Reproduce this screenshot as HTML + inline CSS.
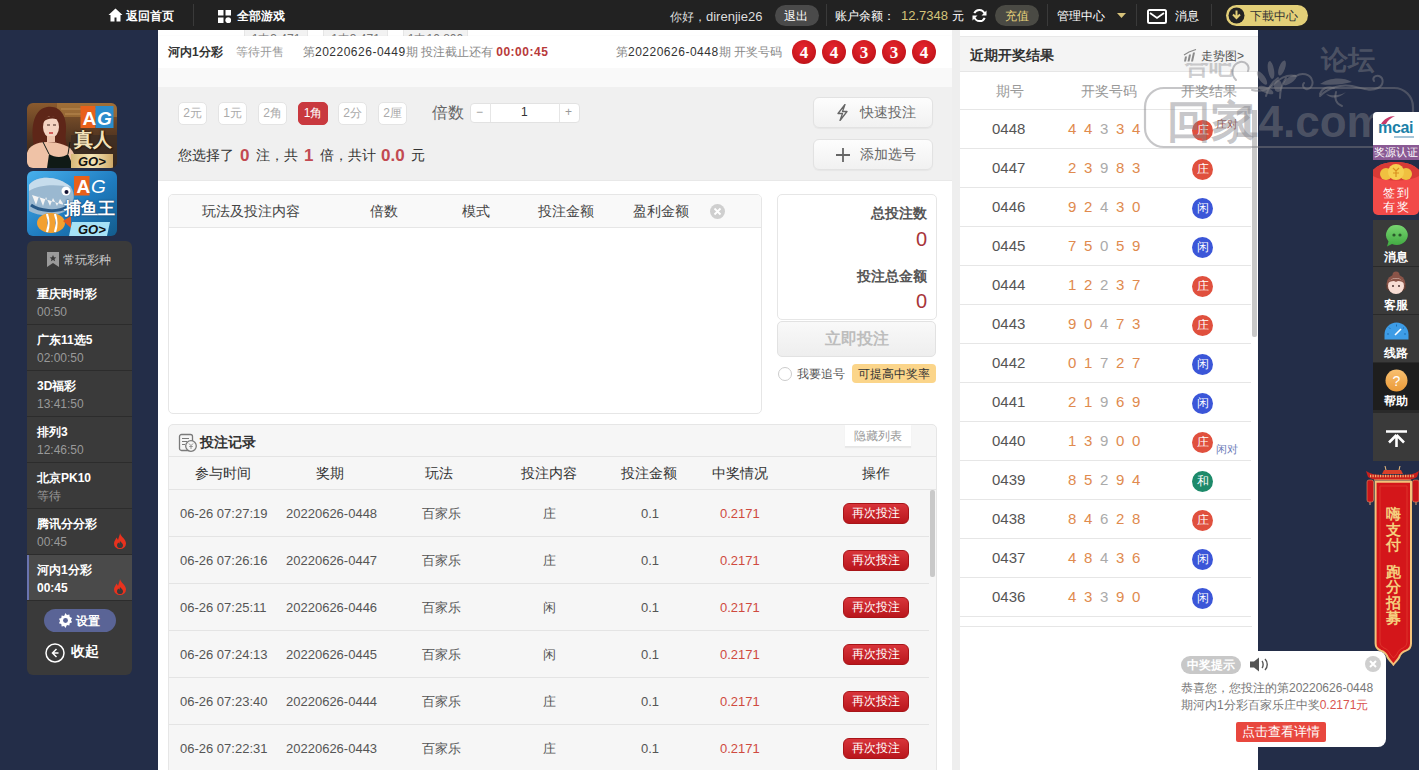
<!DOCTYPE html><html><head><meta charset="utf-8"><style>
*{margin:0;padding:0;box-sizing:border-box}
html,body{width:1419px;height:770px;overflow:hidden}
body{background:#232d48;font-family:"Liberation Sans",sans-serif;font-size:12px;color:#333;position:relative}
.a{position:absolute}
.t{position:absolute;white-space:nowrap;line-height:1}
#top{left:0;top:0;width:1419px;height:30px;background:#222222;z-index:3}
#top .t{color:#fff;font-size:12px;top:10px}
.sep{position:absolute;top:4px;width:1px;height:22px;background:#3a3a3a}
.pill{position:absolute;top:5px;height:21px;border-radius:11px}
.mb{position:absolute;top:102px;width:29px;height:23px;background:#fff;border:1px solid #e4e4e4;border-radius:5px;color:#aaa;font-size:12px;text-align:center;line-height:21px}
.mb.on{background:#c9393f;border-color:#c9393f;color:#fff;width:30px}
.ball{position:absolute;top:40px;width:24px;height:24px;border-radius:50%;background:radial-gradient(circle at 45% 35%,#e5262d,#c8161d 65%,#a80f14);color:#fff;font-family:"Liberation Serif",serif;font-size:17px;font-weight:bold;text-align:center;line-height:25px}
.btn2{position:absolute;left:813px;width:120px;height:31px;border:1px solid #e2e2e2;border-radius:6px;background:linear-gradient(#fdfdfd,#f1f1f1);box-shadow:0 1px 1px rgba(0,0,0,.04)}
.th{position:absolute;font-size:14px;color:#444;white-space:nowrap;line-height:1}
.rec{position:absolute;font-size:13px;color:#555;white-space:nowrap;line-height:1}
.rb{position:absolute;left:843px;width:66px;height:21px;border-radius:6px;background:linear-gradient(#d8343a,#b9161c);border:1px solid #a81418;color:#fff;font-size:12px;text-align:center;line-height:19px}
.rrow{position:absolute;left:960px;width:291px;height:1px;background:#e6e6e6}
.rq{position:absolute;left:992px;font-size:15px;color:#555;line-height:1}
.rn{position:absolute;font-size:15px;color:#e08a4e;line-height:1}
.rn.g{color:#aaa}
.bd{position:absolute;width:21px;height:21px;border-radius:50%;color:#fff;font-size:12px;text-align:center;line-height:21px}
.zh{background:#e0503e}.xi{background:#3b56d8}.he{background:#1d8a6a}
.side{position:absolute;left:27px;width:105px;height:46px;border-top:1px solid #2c2c2c}
.side .n{position:absolute;left:10px;top:9px;font-size:12px;font-weight:bold;color:#fff;line-height:1;white-space:nowrap}
.side .m{position:absolute;left:10px;top:27px;font-size:12px;color:#999;line-height:1;white-space:nowrap}
.fl{position:absolute;left:1373px;width:46px;background:#3a3a3a;z-index:6}
.fl .tx{position:absolute;left:0;width:46px;text-align:center;color:#fff;font-size:12px;line-height:1}
</style></head><body>
<div id="top" class="a">
<svg class="a" style="left:108px;top:8px" width="15" height="14" viewBox="0 0 15 14"><path d="M7.5 0.5L0.5 7h2v6.5h4v-4h2v4h4V7h2z" fill="#fff"/></svg>
<div class="t" style="left:126px;font-weight:bold">返回首页</div>
<div class="sep" style="left:193px"></div>
<svg class="a" style="left:218px;top:10px" width="13" height="13" viewBox="0 0 13 13"><rect x="0" y="0" width="5.5" height="5.5" fill="#fff"/><rect x="7.5" y="0" width="5.5" height="5.5" fill="#fff"/><rect x="0" y="7.5" width="5.5" height="5.5" fill="#fff"/><circle cx="10.25" cy="10.25" r="2.9" fill="#fff"/></svg>
<div class="t" style="left:237px;font-weight:bold">全部游戏</div>
<div class="t" style="left:670px;color:#ddd">你好，<span style="font-size:13px">direnjie26</span></div>
<div class="pill" style="left:775px;width:44px;background:#4a4a4a"></div>
<div class="t" style="left:784px">退出</div>
<div class="sep" style="left:826px"></div>
<div class="t" style="left:835px">账户余额：</div>
<div class="t" style="left:901px;color:#d4c47a;font-size:13px;top:9px">12.7348</div>
<div class="t" style="left:952px">元</div>
<svg class="a" style="left:972px;top:8px" width="15" height="15" viewBox="0 0 15 15"><path d="M12.5 5.5A5.5 5.5 0 0 0 2.3 5.2M2.5 9.5A5.5 5.5 0 0 0 12.7 9.8" fill="none" stroke="#fff" stroke-width="2"/><path d="M14.5 2.5v5h-5z" fill="#fff"/><path d="M0.5 12.5v-5h5z" fill="#fff"/></svg>
<div class="pill" style="left:995px;width:44px;background:#4a4a44"></div>
<div class="t" style="left:1005px;color:#e6d27a">充值</div>
<div class="sep" style="left:1047px"></div>
<div class="t" style="left:1057px">管理中心</div>
<svg class="a" style="left:1117px;top:13px" width="9" height="5" viewBox="0 0 9 5"><path d="M0 0h9L4.5 5z" fill="#d6c27a"/></svg>
<div class="sep" style="left:1136px"></div>
<svg class="a" style="left:1147px;top:9px" width="20" height="15" viewBox="0 0 20 15"><rect x="1" y="1" width="18" height="13" rx="1.5" fill="none" stroke="#fff" stroke-width="2"/><path d="M3 4l7 5 7-5" fill="none" stroke="#fff" stroke-width="1.8"/></svg>
<div class="t" style="left:1175px">消息</div>
<div class="sep" style="left:1211px"></div>
<div class="pill" style="left:1226px;width:82px;background:#e3cf78"></div>
<svg class="a" style="left:1228px;top:7px" width="17" height="17" viewBox="0 0 17 17"><circle cx="8.5" cy="8.5" r="8" fill="#222"/><path d="M8.5 3.5v7M5 7.5l3.5 3.5 3.5-3.5" fill="none" stroke="#e3cf78" stroke-width="2"/></svg>
<div class="t" style="left:1250px;color:#333">下載中心</div>
</div>
<div class="a" style="left:158px;top:30px;width:794px;height:740px;background:#fff"></div>
<div class="a" style="left:244px;top:26px;width:64px;height:12px;background:#f2f2f2;border:1px solid #e6e6e6;overflow:hidden"><div class="t" style="left:0;width:62px;text-align:center;top:6px;font-size:12px;color:#777">1中3.471</div></div>
<div class="a" style="left:323px;top:26px;width:65px;height:12px;background:#f2f2f2;border:1px solid #e6e6e6;overflow:hidden"><div class="t" style="left:0;width:63px;text-align:center;top:6px;font-size:12px;color:#777">1中3.471</div></div>
<div class="a" style="left:403px;top:26px;width:65px;height:12px;background:#f2f2f2;border:1px solid #e6e6e6;overflow:hidden"><div class="t" style="left:0;width:63px;text-align:center;top:6px;font-size:12px;color:#777">1中10.800</div></div>
<div class="a" style="left:158px;top:36px;width:794px;height:32px;background:#fff;box-shadow:0 1px 2px rgba(0,0,0,.16)"></div>
<div class="a" style="left:158px;top:68px;width:794px;height:19px;background:#f9f9f9"></div>
<div class="a" style="left:158px;top:87px;width:794px;height:94px;background:#f0f0f0;border-bottom:1px solid #e8e8e8"></div>
<div class="t" style="left:168px;top:46px;font-size:12px;font-weight:bold;color:#333">河内1分彩</div>
<div class="t" style="left:236px;top:46px;font-size:12px;color:#999">等待开售</div>
<div class="t" style="left:303px;top:46px;font-size:12px;color:#888">第<span style="color:#333;letter-spacing:.5px">20220626-0449</span>期 投注截止还有 <b style="color:#b83a3a;letter-spacing:.5px">00:00:45</b></div>
<div class="t" style="left:616px;top:46px;font-size:12px;color:#888">第<span style="color:#333;letter-spacing:.5px">20220626-0448</span>期 开奖号码</div>
<div class="ball" style="left:792px">4</div>
<div class="ball" style="left:822px">4</div>
<div class="ball" style="left:852px">3</div>
<div class="ball" style="left:882px">3</div>
<div class="ball" style="left:912px">4</div>
<div class="mb" style="left:178px">2元</div>
<div class="mb" style="left:218px">1元</div>
<div class="mb" style="left:258px">2角</div>
<div class="mb on" style="left:298px">1角</div>
<div class="mb" style="left:338px">2分</div>
<div class="mb" style="left:378px">2厘</div>
<div class="t" style="left:432px;top:105px;font-size:16px;color:#666">倍数</div>
<div class="a" style="left:470px;top:103px;width:110px;height:20px;background:#fff;border:1px solid #e2e2e2;border-radius:4px"></div>
<div class="a" style="left:490px;top:103px;width:1px;height:19px;background:#e6e6e6"></div>
<div class="a" style="left:559px;top:103px;width:1px;height:19px;background:#e6e6e6"></div>
<div class="t" style="left:476px;top:106px;font-size:12px;color:#999">−</div>
<div class="t" style="left:521px;top:106px;font-size:12px;color:#333">1</div>
<div class="t" style="left:565px;top:106px;font-size:12px;color:#999">+</div>
<div class="t" style="left:178px;top:148px;font-size:14px;color:#333">您选择了</div>
<div class="t" style="left:240px;top:147px;font-size:17px;font-weight:bold;color:#c24a52">0</div>
<div class="t" style="left:256px;top:148px;font-size:14px;color:#333">注，共</div>
<div class="t" style="left:304px;top:147px;font-size:17px;font-weight:bold;color:#c24a52">1</div>
<div class="t" style="left:320px;top:148px;font-size:14px;color:#333">倍，共计</div>
<div class="t" style="left:381px;top:147px;font-size:17px;font-weight:bold;color:#c24a52">0.0</div>
<div class="t" style="left:411px;top:148px;font-size:14px;color:#333">元</div>
<div class="btn2" style="top:97px"></div>
<svg class="a" style="left:836px;top:104px" width="13" height="17" viewBox="0 0 13 17"><path d="M9 0.5L2 9.5h4.5L4 16.5l7-9H6.5z" fill="none" stroke="#666" stroke-width="1.3" stroke-linejoin="round"/></svg>
<div class="t" style="left:860px;top:105px;font-size:14px;color:#666">快速投注</div>
<div class="btn2" style="top:139px"></div>
<svg class="a" style="left:836px;top:148px" width="14" height="14" viewBox="0 0 14 14"><path d="M7 0v14M0 7h14" stroke="#666" stroke-width="1.8"/></svg>
<div class="t" style="left:860px;top:147px;font-size:14px;color:#666">添加选号</div>
<div class="a" style="left:168px;top:194px;width:594px;height:220px;background:#fff;border:1px solid #e6e6e6;border-radius:5px;overflow:hidden"><div class="a" style="left:0;top:0;width:592px;height:33px;background:#f9f9f9;border-bottom:1px solid #e6e6e6"></div></div>
<div class="th" style="left:202px;top:204px">玩法及投注内容</div>
<div class="th" style="left:370px;top:204px">倍数</div>
<div class="th" style="left:462px;top:204px">模式</div>
<div class="th" style="left:538px;top:204px">投注金额</div>
<div class="th" style="left:633px;top:204px">盈利金额</div>
<svg class="a" style="left:710px;top:204px" width="15" height="15" viewBox="0 0 15 15"><circle cx="7.5" cy="7.5" r="7.5" fill="#cfcfcf"/><path d="M4.5 4.5l6 6M10.5 4.5l-6 6" stroke="#fff" stroke-width="1.8"/></svg>
<div class="a" style="left:777px;top:194px;width:160px;height:126px;background:#fff;border:1px solid #e6e6e6;border-radius:5px"></div>
<div class="t" style="left:777px;width:150px;text-align:right;top:206px;font-size:14px;font-weight:bold;color:#555">总投注数</div>
<div class="t" style="left:777px;width:150px;text-align:right;top:229px;font-size:20px;color:#a8353a">0</div>
<div class="t" style="left:777px;width:150px;text-align:right;top:269px;font-size:14px;font-weight:bold;color:#555">投注总金额</div>
<div class="t" style="left:777px;width:150px;text-align:right;top:291px;font-size:20px;color:#a8353a">0</div>
<div class="a" style="left:777px;top:321px;width:159px;height:36px;border:1px solid #e2e2e2;border-radius:5px;background:linear-gradient(#f9f9f9,#eeeeee)"></div>
<div class="t" style="left:777px;width:159px;text-align:center;top:331px;font-size:16px;font-weight:bold;color:#bdbdbd">立即投注</div>
<div class="a" style="left:778px;top:367px;width:14px;height:14px;border:1px solid #ccc;border-radius:50%;background:#fff"></div>
<div class="t" style="left:797px;top:368px;font-size:12px;color:#555">我要追号</div>
<div class="a" style="left:852px;top:364px;width:84px;height:19px;border-radius:4px;background:#fbd58a"></div>
<div class="t" style="left:852px;width:84px;text-align:center;top:368px;font-size:12px;color:#333">可提高中奖率</div>
<div class="a" style="left:168px;top:424px;width:769px;height:360px;background:#f6f6f6;border:1px solid #e6e6e6;border-radius:5px"></div>
<div class="a" style="left:169px;top:456px;width:767px;height:1px;background:#e4e4e4"></div>
<div class="a" style="left:169px;top:489px;width:767px;height:1px;background:#e4e4e4"></div>
<svg class="a" style="left:178px;top:433px" width="20" height="20" viewBox="0 0 20 20"><rect x="1.5" y="1.5" width="13" height="16" rx="2" fill="none" stroke="#7a7a7a" stroke-width="1.3"/><path d="M4 5.5h7M4 8.5h5M4 11.5h3" stroke="#7a7a7a" stroke-width="1.2"/><circle cx="13" cy="13" r="5.3" fill="#f6f6f6" stroke="#7a7a7a" stroke-width="1.3"/><path d="M11 10.5l2 2.2 2-2.2M13 12.7v3.3M11.2 13.5h3.6" fill="none" stroke="#8a8a8a" stroke-width=".9"/></svg>
<div class="t" style="left:200px;top:435px;font-size:14px;font-weight:bold;color:#333">投注记录</div>
<div class="a" style="left:845px;top:425px;width:66px;height:22px;background:#fff;border-bottom:1px solid #e6e6e6;box-shadow:0 1px 1px rgba(0,0,0,.05)"></div>
<div class="t" style="left:845px;width:66px;text-align:center;top:430px;font-size:12px;color:#999">隐藏列表</div>
<div class="th" style="left:195px;top:466px;color:#333">参与时间</div>
<div class="th" style="left:316px;top:466px;color:#333">奖期</div>
<div class="th" style="left:425px;top:466px;color:#333">玩法</div>
<div class="th" style="left:521px;top:466px;color:#333">投注内容</div>
<div class="th" style="left:621px;top:466px;color:#333">投注金额</div>
<div class="th" style="left:712px;top:466px;color:#333">中奖情况</div>
<div class="th" style="left:862px;top:466px;color:#333">操作</div>
<div class="rec" style="left:180px;top:507px">06-26 07:27:19</div>
<div class="rec" style="left:286px;top:507px">20220626-0448</div>
<div class="rec" style="left:422px;top:507px">百家乐</div>
<div class="rec" style="left:543px;top:507px">庄</div>
<div class="rec" style="left:641px;top:507px">0.1</div>
<div class="rec" style="left:720px;top:507px;color:#cf4a3f">0.2171</div>
<div class="rb" style="top:503px">再次投注</div>
<div class="a" style="left:169px;top:536px;width:760px;height:1px;background:#e4e4e4"></div>
<div class="rec" style="left:180px;top:554px">06-26 07:26:16</div>
<div class="rec" style="left:286px;top:554px">20220626-0447</div>
<div class="rec" style="left:422px;top:554px">百家乐</div>
<div class="rec" style="left:543px;top:554px">庄</div>
<div class="rec" style="left:641px;top:554px">0.1</div>
<div class="rec" style="left:720px;top:554px;color:#cf4a3f">0.2171</div>
<div class="rb" style="top:550px">再次投注</div>
<div class="a" style="left:169px;top:583px;width:760px;height:1px;background:#e4e4e4"></div>
<div class="rec" style="left:180px;top:601px">06-26 07:25:11</div>
<div class="rec" style="left:286px;top:601px">20220626-0446</div>
<div class="rec" style="left:422px;top:601px">百家乐</div>
<div class="rec" style="left:543px;top:601px">闲</div>
<div class="rec" style="left:641px;top:601px">0.1</div>
<div class="rec" style="left:720px;top:601px;color:#cf4a3f">0.2171</div>
<div class="rb" style="top:597px">再次投注</div>
<div class="a" style="left:169px;top:630px;width:760px;height:1px;background:#e4e4e4"></div>
<div class="rec" style="left:180px;top:648px">06-26 07:24:13</div>
<div class="rec" style="left:286px;top:648px">20220626-0445</div>
<div class="rec" style="left:422px;top:648px">百家乐</div>
<div class="rec" style="left:543px;top:648px">闲</div>
<div class="rec" style="left:641px;top:648px">0.1</div>
<div class="rec" style="left:720px;top:648px;color:#cf4a3f">0.2171</div>
<div class="rb" style="top:644px">再次投注</div>
<div class="a" style="left:169px;top:677px;width:760px;height:1px;background:#e4e4e4"></div>
<div class="rec" style="left:180px;top:695px">06-26 07:23:40</div>
<div class="rec" style="left:286px;top:695px">20220626-0444</div>
<div class="rec" style="left:422px;top:695px">百家乐</div>
<div class="rec" style="left:543px;top:695px">庄</div>
<div class="rec" style="left:641px;top:695px">0.1</div>
<div class="rec" style="left:720px;top:695px;color:#cf4a3f">0.2171</div>
<div class="rb" style="top:691px">再次投注</div>
<div class="a" style="left:169px;top:724px;width:760px;height:1px;background:#e4e4e4"></div>
<div class="rec" style="left:180px;top:742px">06-26 07:22:31</div>
<div class="rec" style="left:286px;top:742px">20220626-0443</div>
<div class="rec" style="left:422px;top:742px">百家乐</div>
<div class="rec" style="left:543px;top:742px">庄</div>
<div class="rec" style="left:641px;top:742px">0.1</div>
<div class="rec" style="left:720px;top:742px;color:#cf4a3f">0.2171</div>
<div class="rb" style="top:738px">再次投注</div>
<div class="a" style="left:930px;top:490px;width:5px;height:87px;background:#c9c9c9;border-radius:2px"></div>
<div class="a" style="left:952px;top:30px;width:8px;height:740px;background:#eeeeee"></div>
<div class="a" style="left:960px;top:30px;width:298px;height:740px;background:#fff"></div>
<div class="a" style="left:960px;top:36px;width:298px;height:36px;background:#f4f4f4;border-top:1px solid #e8e8e8;border-bottom:1px solid #e6e6e6"></div>
<div class="t" style="left:970px;top:48px;font-size:14px;font-weight:bold;color:#333">近期开奖结果</div>
<svg class="a" style="left:1183px;top:49px" width="14" height="13" viewBox="0 0 14 13"><path d="M1 12.5l1-5h2l-1 5zM4.5 12.5l1.5-7h2l-1.5 7zM8 12.5l2-9h2l-2 9z" fill="#8a8a8a"/><path d="M1 6l5-3 7-2.5" fill="none" stroke="#8a8a8a" stroke-width="1.2"/></svg>
<div class="t" style="left:1201px;top:50px;font-size:12px;color:#555">走势图&gt;</div>
<div class="t" style="left:996px;top:84px;font-size:14px;color:#999">期号</div>
<div class="t" style="left:1081px;top:84px;font-size:14px;color:#999">开奖号码</div>
<div class="t" style="left:1181px;top:84px;font-size:14px;color:#999">开奖结果</div>
<div class="rrow" style="top:109px"></div>
<div class="rq" style="top:121px">0448</div>
<div class="rn" style="left:1068px;top:121px">4</div>
<div class="rn" style="left:1084px;top:121px">4</div>
<div class="rn g" style="left:1100px;top:121px">3</div>
<div class="rn" style="left:1116px;top:121px">3</div>
<div class="rn" style="left:1132px;top:121px">4</div>
<div class="bd zh" style="left:1192px;top:120px">庄</div>
<div class="t" style="left:1216px;top:119px;font-size:11px;color:#a0504a">庄对</div>
<div class="rrow" style="top:148px"></div>
<div class="rq" style="top:160px">0447</div>
<div class="rn" style="left:1068px;top:160px">2</div>
<div class="rn" style="left:1084px;top:160px">3</div>
<div class="rn g" style="left:1100px;top:160px">9</div>
<div class="rn" style="left:1116px;top:160px">8</div>
<div class="rn" style="left:1132px;top:160px">3</div>
<div class="bd zh" style="left:1192px;top:159px">庄</div>
<div class="rrow" style="top:187px"></div>
<div class="rq" style="top:199px">0446</div>
<div class="rn" style="left:1068px;top:199px">9</div>
<div class="rn" style="left:1084px;top:199px">2</div>
<div class="rn g" style="left:1100px;top:199px">4</div>
<div class="rn" style="left:1116px;top:199px">3</div>
<div class="rn" style="left:1132px;top:199px">0</div>
<div class="bd xi" style="left:1192px;top:198px">闲</div>
<div class="rrow" style="top:226px"></div>
<div class="rq" style="top:238px">0445</div>
<div class="rn" style="left:1068px;top:238px">7</div>
<div class="rn" style="left:1084px;top:238px">5</div>
<div class="rn g" style="left:1100px;top:238px">0</div>
<div class="rn" style="left:1116px;top:238px">5</div>
<div class="rn" style="left:1132px;top:238px">9</div>
<div class="bd xi" style="left:1192px;top:237px">闲</div>
<div class="rrow" style="top:265px"></div>
<div class="rq" style="top:277px">0444</div>
<div class="rn" style="left:1068px;top:277px">1</div>
<div class="rn" style="left:1084px;top:277px">2</div>
<div class="rn g" style="left:1100px;top:277px">2</div>
<div class="rn" style="left:1116px;top:277px">3</div>
<div class="rn" style="left:1132px;top:277px">7</div>
<div class="bd zh" style="left:1192px;top:276px">庄</div>
<div class="rrow" style="top:304px"></div>
<div class="rq" style="top:316px">0443</div>
<div class="rn" style="left:1068px;top:316px">9</div>
<div class="rn" style="left:1084px;top:316px">0</div>
<div class="rn g" style="left:1100px;top:316px">4</div>
<div class="rn" style="left:1116px;top:316px">7</div>
<div class="rn" style="left:1132px;top:316px">3</div>
<div class="bd zh" style="left:1192px;top:315px">庄</div>
<div class="rrow" style="top:343px"></div>
<div class="rq" style="top:355px">0442</div>
<div class="rn" style="left:1068px;top:355px">0</div>
<div class="rn" style="left:1084px;top:355px">1</div>
<div class="rn g" style="left:1100px;top:355px">7</div>
<div class="rn" style="left:1116px;top:355px">2</div>
<div class="rn" style="left:1132px;top:355px">7</div>
<div class="bd xi" style="left:1192px;top:354px">闲</div>
<div class="rrow" style="top:382px"></div>
<div class="rq" style="top:394px">0441</div>
<div class="rn" style="left:1068px;top:394px">2</div>
<div class="rn" style="left:1084px;top:394px">1</div>
<div class="rn g" style="left:1100px;top:394px">9</div>
<div class="rn" style="left:1116px;top:394px">6</div>
<div class="rn" style="left:1132px;top:394px">9</div>
<div class="bd xi" style="left:1192px;top:393px">闲</div>
<div class="rrow" style="top:421px"></div>
<div class="rq" style="top:433px">0440</div>
<div class="rn" style="left:1068px;top:433px">1</div>
<div class="rn" style="left:1084px;top:433px">3</div>
<div class="rn g" style="left:1100px;top:433px">9</div>
<div class="rn" style="left:1116px;top:433px">0</div>
<div class="rn" style="left:1132px;top:433px">0</div>
<div class="bd zh" style="left:1192px;top:432px">庄</div>
<div class="t" style="left:1216px;top:444px;font-size:11px;color:#6a7ab8">闲对</div>
<div class="rrow" style="top:460px"></div>
<div class="rq" style="top:472px">0439</div>
<div class="rn" style="left:1068px;top:472px">8</div>
<div class="rn" style="left:1084px;top:472px">5</div>
<div class="rn g" style="left:1100px;top:472px">2</div>
<div class="rn" style="left:1116px;top:472px">9</div>
<div class="rn" style="left:1132px;top:472px">4</div>
<div class="bd he" style="left:1192px;top:471px">和</div>
<div class="rrow" style="top:499px"></div>
<div class="rq" style="top:511px">0438</div>
<div class="rn" style="left:1068px;top:511px">8</div>
<div class="rn" style="left:1084px;top:511px">4</div>
<div class="rn g" style="left:1100px;top:511px">6</div>
<div class="rn" style="left:1116px;top:511px">2</div>
<div class="rn" style="left:1132px;top:511px">8</div>
<div class="bd zh" style="left:1192px;top:510px">庄</div>
<div class="rrow" style="top:538px"></div>
<div class="rq" style="top:550px">0437</div>
<div class="rn" style="left:1068px;top:550px">4</div>
<div class="rn" style="left:1084px;top:550px">8</div>
<div class="rn g" style="left:1100px;top:550px">4</div>
<div class="rn" style="left:1116px;top:550px">3</div>
<div class="rn" style="left:1132px;top:550px">6</div>
<div class="bd xi" style="left:1192px;top:549px">闲</div>
<div class="rrow" style="top:577px"></div>
<div class="rq" style="top:589px">0436</div>
<div class="rn" style="left:1068px;top:589px">4</div>
<div class="rn" style="left:1084px;top:589px">3</div>
<div class="rn g" style="left:1100px;top:589px">3</div>
<div class="rn" style="left:1116px;top:589px">9</div>
<div class="rn" style="left:1132px;top:589px">0</div>
<div class="bd xi" style="left:1192px;top:588px">闲</div>
<div class="rrow" style="top:616px"></div>
<div class="a" style="left:960px;top:626px;width:292px;height:1px;background:#e6e6e6"></div>
<div class="a" style="left:1252px;top:110px;width:5px;height:227px;background:#c8c8c8;border-radius:0 0 2px 2px"></div>
<svg class="a" style="left:27px;top:103px" width="90" height="65" viewBox="0 0 90 65">
<defs><clipPath id="c1"><rect width="90" height="65" rx="6"/></clipPath>
<linearGradient id="bg1" x1="0" y1="0" x2="0" y2="1"><stop offset="0" stop-color="#8a5a2e"/><stop offset=".45" stop-color="#5a3a22"/><stop offset="1" stop-color="#2a1e18"/></linearGradient>
<linearGradient id="gold" x1="0" y1="0" x2="1" y2="0"><stop offset="0" stop-color="#d8b878"/><stop offset=".5" stop-color="#f6e6b8"/><stop offset="1" stop-color="#cfa968"/></linearGradient></defs>
<g clip-path="url(#c1)">
<rect width="90" height="65" fill="url(#bg1)"/>
<path d="M30 0h60v14H30z" fill="#b08040" opacity=".55"/>
<path d="M34 6h50M38 11h46" stroke="#e0b070" stroke-width="1.2" opacity=".5"/>
<path d="M44 32h46v33H44z" fill="#3a2c24" opacity=".7"/>
<path d="M8 46C3 30 5 6 20 4c14-2 20 10 19 24-1 8 0 14 4 20-6 2-30 4-35-2z" fill="#5e2618"/>
<ellipse cx="24" cy="24" rx="8" ry="11" fill="#f4d4c2"/>
<path d="M15 20c3-8 14-10 18-2-4-3-12-4-18 2z" fill="#5e2618"/>
<path d="M20 22h3M26 22h3" stroke="#3a2018" stroke-width="1"/><path d="M22 30h4" stroke="#c83838" stroke-width="1.3"/>
<path d="M20 33h8v6h-8z" fill="#eec4ac"/>
<path d="M0 65V50c2-7 9-11 20-11s24 3 27 12v14z" fill="#efc2a6"/>
<path d="M20 65l2-14c6 4 14 4 19 0l6 14z" fill="#101a16"/>
<path d="M22 51l-6-12M41 51l2-12" stroke="#101a16" stroke-width="1"/>
<rect x="53.5" y="3" width="15" height="22" fill="#e8601a"/><rect x="68.5" y="3" width="18" height="22" fill="#2a8ccc"/>
<text x="55.5" y="22" font-family="Liberation Sans" font-weight="bold" font-size="19" fill="#fff">A</text>
<text x="70" y="22" font-family="Liberation Sans" font-weight="bold" font-style="italic" font-size="19" fill="#fff">G</text>

<rect x="44" y="51" width="42" height="14" fill="url(#gold)"/>
<text x="51" y="63" font-family="Liberation Sans" font-weight="bold" font-style="italic" font-size="13" fill="#111">GO&gt;</text>
</g></svg>
<svg class="a" style="left:27px;top:171px" width="90" height="65" viewBox="0 0 90 65">
<defs><clipPath id="c2"><rect width="90" height="65" rx="6"/></clipPath>
<linearGradient id="bg2" x1="0" y1="0" x2="1" y2="1"><stop offset="0" stop-color="#48b0ec"/><stop offset=".55" stop-color="#1f7cc0"/><stop offset="1" stop-color="#135c8c"/></linearGradient></defs>
<g clip-path="url(#c2)">
<rect width="90" height="65" fill="url(#bg2)"/>
<path d="M2 14C10 4 30 4 44 16c4 6 4 16-2 22-10 8-30 8-40 2z" fill="#9ab8d0"/>
<path d="M2 14C10 4 30 4 44 16c-10-2-30-4-42 4z" fill="#c6dcec"/>
<circle cx="39" cy="20" r="4.5" fill="#fff"/><circle cx="39.5" cy="21" r="2" fill="#113"/>
<path d="M5 24l4 10 3-9 4 10 3-9 4 9 3-8 4 8 3-7 4 6z" fill="#f4f4f4"/>
<path d="M4 34c8 6 26 8 36 2" fill="none" stroke="#2a5a88" stroke-width="3"/>
<ellipse cx="24" cy="52" rx="14" ry="10" fill="#f2a030"/>
<path d="M20 43c2 6 2 12 0 18M28 43c2 6 2 12 0 18" stroke="#fff" stroke-width="2.2"/>
<path d="M36 50l8-5v12z" fill="#e05a20"/>
<rect x="47" y="5" width="15.5" height="19.5" fill="#e8601a"/>
<text x="49.5" y="22" font-family="Liberation Sans" font-weight="bold" font-size="19" fill="#fff">A</text>
<text x="64" y="22" font-family="Liberation Sans" font-style="italic" font-size="19" fill="#fff">G</text>

<path d="M45 51h38l-3 14H42z" fill="#a6e2f6"/>
<text x="51" y="63" font-family="Liberation Sans" font-weight="bold" font-style="italic" font-size="13" fill="#111">GO&gt;</text>
</g></svg>
<div class="t" style="left:74px;top:130px;font-size:19px;font-weight:bold;color:#f4e2b8;text-shadow:0 0 1px #2a1a10,0 0 2px #2a1a10,1px 1px 1px #2a1a10">真人</div>
<div class="t" style="left:64px;top:200px;font-size:17px;font-weight:bold;color:#fff;text-shadow:0 0 1px #104070,0 0 2px #104070">捕鱼王</div>
<div class="a" style="left:27px;top:241px;width:105px;height:434px;background:#3a3a3a;border-radius:6px"></div>
<svg class="a" style="left:47px;top:252px" width="12" height="15" viewBox="0 0 12 15"><path d="M0 0h12v15l-6-4-6 4z" fill="#9a9a9a"/><path d="M6 3l1 2.2 2.3.2-1.8 1.5.6 2.3L6 8 3.9 9.2l.6-2.3L2.7 5.4 5 5.2z" fill="#3a3a3a"/></svg>
<div class="t" style="left:63px;top:254px;font-size:12px;color:#ccc">常玩彩种</div>
<div class="side" style="top:278px;"><div class="n">重庆时时彩</div><div class="m" style="">00:50</div></div>
<div class="side" style="top:324px;"><div class="n">广东11选5</div><div class="m" style="">02:00:50</div></div>
<div class="side" style="top:370px;"><div class="n">3D福彩</div><div class="m" style="">13:41:50</div></div>
<div class="side" style="top:416px;"><div class="n">排列3</div><div class="m" style="">12:46:50</div></div>
<div class="side" style="top:462px;"><div class="n">北京PK10</div><div class="m" style="">等待</div></div>
<div class="side" style="top:508px;"><div class="n">腾讯分分彩</div><div class="m" style="">00:45</div></div>
<svg class="a" style="left:113px;top:533px" width="14" height="16" viewBox="0 0 14 16"><path d="M7 0C8 4 13 6 13 10.5A6 5.5 0 0 1 1 10.5C1 8 3 6 3.5 4.5 4.5 6 5 7 5 7 5.5 4.5 7 2 7 0z" fill="#e8321e"/><path d="M7 8c1 1.5 3 2.5 3 4.2A3 2.8 0 0 1 4 12.2C4 11 5 10 5.5 9.5c.5.8 1 1.2 1 1.2z" fill="#3a3a3a"/></svg>
<div class="side" style="top:554px;background:#4a4a4a;box-shadow:inset 2px 0 0 #6a74b0;"><div class="n">河内1分彩</div><div class="m" style="color:#fff;font-weight:bold">00:45</div></div>
<svg class="a" style="left:113px;top:579px" width="14" height="16" viewBox="0 0 14 16"><path d="M7 0C8 4 13 6 13 10.5A6 5.5 0 0 1 1 10.5C1 8 3 6 3.5 4.5 4.5 6 5 7 5 7 5.5 4.5 7 2 7 0z" fill="#e8321e"/><path d="M7 8c1 1.5 3 2.5 3 4.2A3 2.8 0 0 1 4 12.2C4 11 5 10 5.5 9.5c.5.8 1 1.2 1 1.2z" fill="#3a3a3a"/></svg>
<div class="side" style="top:600px;border-top:1px solid #2c2c2c;height:0"></div>
<div class="a" style="left:44px;top:609px;width:72px;height:23px;border-radius:12px;background:#5a6496"></div>
<svg class="a" style="left:58px;top:613px" width="15" height="15" viewBox="0 0 16 16"><path d="M8 0l1.5 2.2 2.6-.6.4 2.6 2.5 1-1.2 2.3 1.2 2.3-2.5 1-.4 2.6-2.6-.6L8 16l-1.5-2.2-2.6.6-.4-2.6-2.5-1L2.2 8.5 1 6.2l2.5-1 .4-2.6 2.6.6z" fill="#fff"/><circle cx="8" cy="8" r="2.6" fill="#5a6496"/></svg>
<div class="t" style="left:76px;top:615px;font-size:12px;font-weight:bold;color:#fff">设置</div>
<svg class="a" style="left:45px;top:643px" width="20" height="20" viewBox="0 0 20 20"><circle cx="10" cy="10" r="9" fill="none" stroke="#fff" stroke-width="1.5"/><path d="M11.5 6l-4 4 4 4M7.5 10h6" fill="none" stroke="#fff" stroke-width="1.5"/></svg>
<div class="t" style="left:71px;top:644px;font-size:14px;font-weight:bold;color:#fff">收起</div>
<svg class="a" style="left:1140px;top:40px;z-index:5" width="279" height="112" viewBox="0 0 279 112">
<defs><clipPath id="wc"><rect x="0" y="23" width="120" height="40"/></clipPath></defs><text clip-path="url(#wc)" x="45" y="34" font-family="Liberation Sans" font-weight="bold" font-size="24" fill="rgba(128,128,134,.4)">合吧</text>
<g fill="rgba(128,128,134,.45)">
<text x="27" y="97" font-family="Liberation Sans" font-weight="bold" font-size="44">回家<tspan x="94">14.com</tspan></text>
<text x="181" y="29" font-family="Liberation Sans" font-weight="bold" font-size="27">论坛</text>
</g>
<rect x="5" y="48" width="268" height="59" rx="19" fill="none" stroke="rgba(128,128,134,.45)" stroke-width="2.2"/>
<g fill="none" stroke="rgba(128,128,134,.5)" stroke-width="2" stroke-linecap="round">
<path d="M112 50c8 2 16 0 22-6s14-10 22-8M156 36c6-4 14-2 16 4 2 5-2 10-6 9-3-1-4-4-2-6"/>
<path d="M126 56c2-8 6-14 12-18M140 58c0-8 2-14 6-20"/>
<path d="M96 40c-6-6-4-16 4-18 6-1 10 4 8 9"/>
<path d="M180 56c8-8 20-12 32-10 10 2 18 6 26 2 6-3 6-10 1-12-4-1-7 2-5 5"/>
<path d="M196 52c-2 6 0 12 6 14M194 48c-6-2-12 0-14 6"/>
</g>
<g fill="rgba(128,128,134,.5)">
<ellipse cx="122" cy="38" rx="3" ry="8" transform="rotate(-35 122 38)"/>
<ellipse cx="131" cy="30" rx="3" ry="9" transform="rotate(-10 131 30)"/>
<ellipse cx="142" cy="28" rx="3" ry="8" transform="rotate(20 142 28)"/>
<ellipse cx="150" cy="40" rx="3" ry="8" transform="rotate(55 150 40)"/>
<ellipse cx="126" cy="50" rx="3" ry="8" transform="rotate(-65 126 50)"/>
<ellipse cx="138" cy="46" rx="4" ry="6"/>
<path d="M180 44c8-6 22-8 32-2-8 2-20 4-32 2z"/>
<path d="M186 54c6 2 14 2 20-2-6 6-14 8-20 2z"/>
</g>
</svg>
<div class="a" style="z-index:6;left:1373px;top:112px;width:46px;height:33px;background:#fff;border-radius:4px 0 0 0"></div>
<div class="t" style="z-index:6;left:1378px;top:120px;font-size:16px;font-weight:bold;color:#1b7fa8;letter-spacing:-0.3px">mcai</div>
<svg class="a" style="z-index:6;left:1380px;top:115px" width="16" height="10" viewBox="0 0 16 10"><path d="M1 9c3-5 8-8 14-8-4 2-7 4-9 8z" fill="#c83a6a"/></svg>
<div class="a" style="z-index:6;left:1394px;top:136px;width:20px;height:2px;background:#6aa0c0;opacity:.6"></div>
<div class="a" style="z-index:6;left:1373px;top:145px;width:46px;height:15px;background:#8a5a94"></div>
<div class="t" style="z-index:6;left:1373px;width:46px;text-align:center;top:147px;font-size:11px;color:#fff">奖源认证</div>
<svg class="a" style="z-index:6;left:1373px;top:162px" width="46" height="53" viewBox="0 0 46 53"><path d="M0 8C6 2 14 0 23 0s17 2 23 8v40a5 5 0 0 1-5 5H5a5 5 0 0 1-5-5z" fill="#f24a48"/><path d="M0 8C6 2 14 0 23 0s17 2 23 8v6C36 20 10 20 0 14z" fill="#d83a36"/><circle cx="13" cy="12" r="6" fill="#f0c040"/><circle cx="33" cy="12" r="6" fill="#f0c040"/><circle cx="23" cy="10" r="8" fill="#f6d050"/><path d="M20 6l3 3 3-3M23 9v6M20 11h6" stroke="#d89020" stroke-width="1.2" fill="none"/></svg>
<div class="t" style="z-index:6;left:1373px;width:46px;text-align:center;top:187px;font-size:12px;color:#fff;letter-spacing:2px;padding-left:2px">签到</div>
<div class="t" style="z-index:6;left:1373px;width:46px;text-align:center;top:201px;font-size:12px;color:#fff;letter-spacing:2px;padding-left:2px">有奖</div>
<div class="fl" style="top:220px;height:241px;background:#2a2a2a"></div>
<div class="fl" style="top:220px;height:46px"></div>
<div class="fl" style="top:267px;height:47px"></div>
<div class="fl" style="top:315px;height:47px"></div>
<div class="fl" style="top:363px;height:47px;background:#1e1e1e"></div>
<div class="fl" style="top:413px;height:48px"></div>
<svg class="a" style="z-index:6;left:1385px;top:224px" width="24" height="23" viewBox="0 0 24 23"><defs><linearGradient id="gb" x1="0" y1="0" x2="0" y2="1"><stop offset="0" stop-color="#78d470"/><stop offset="1" stop-color="#3fa840"/></linearGradient></defs><path d="M12 1a11 10 0 1 1-5 19l-5 2.5 1.5-5A10 10 0 0 1 12 1z" fill="url(#gb)"/><circle cx="9" cy="11" r="1.6" fill="#2a5a2a"/><circle cx="15" cy="11" r="1.6" fill="#2a5a2a"/></svg>
<div class="fl" style="top:251px;height:0"><div class="tx" style="top:0;font-size:12px;font-weight:bold">消息</div></div>
<svg class="a" style="z-index:6;left:1384px;top:271px" width="24" height="24" viewBox="0 0 24 24"><circle cx="12" cy="4" r="3.5" fill="#8a5448"/><circle cx="12" cy="13" r="9.5" fill="#8a5448"/><ellipse cx="12" cy="15" rx="8" ry="8" fill="#f8ddd4"/><path d="M4 12c2-6 14-6 16 0-3-2-6-3-8-1-2-2-5-1-8 1z" fill="#8a5448"/><circle cx="9" cy="15" r="1" fill="#4a3030"/><circle cx="15" cy="15" r="1" fill="#4a3030"/><path d="M3 14c-1 3 0 5 2 5M21 14c1 3 0 5-2 5" stroke="#5a3a30" stroke-width="1.2" fill="none"/></svg>
<div class="fl" style="top:299px;height:0"><div class="tx" style="top:0;font-size:12px;font-weight:bold">客服</div></div>
<svg class="a" style="z-index:6;left:1384px;top:322px" width="25" height="18" viewBox="0 0 25 18"><path d="M0.5 17.5V12.5A12 12 0 0 1 24.5 12.5v5z" fill="#3d9ce6"/><path d="M12.5 2.5v2M5 5.5l1.3 1.3M20 5.5l-1.3 1.3M3 12h2M20 12h2" stroke="#1c6ab0" stroke-width="1"/><path d="M11 13l6-6" stroke="#fff" stroke-width="1.6"/></svg>
<div class="fl" style="top:347px;height:0"><div class="tx" style="top:0;font-size:12px;font-weight:bold">线路</div></div>
<svg class="a" style="z-index:6;left:1385px;top:369px" width="23" height="23" viewBox="0 0 23 23"><defs><linearGradient id="hq" x1="0" y1="0" x2="0" y2="1"><stop offset="0" stop-color="#f8c070"/><stop offset="1" stop-color="#eb9a38"/></linearGradient></defs><circle cx="11.5" cy="11.5" r="11" fill="url(#hq)"/><text x="11.5" y="17" font-family="Liberation Sans" font-size="14" fill="#fff" text-anchor="middle">?</text></svg>
<div class="fl" style="top:395px;height:0"><div class="tx" style="top:0;font-size:12px;font-weight:bold">帮助</div></div>
<svg class="a" style="z-index:6;left:1386px;top:430px" width="21" height="17" viewBox="0 0 21 17"><path d="M0 1.5h21M10.5 5L3 12.5M10.5 5L18 12.5M10.5 5v12" stroke="#fff" stroke-width="2.6"/></svg>
<svg class="a" style="z-index:6;left:1366px;top:466px" width="53" height="200" viewBox="0 0 53 200">
<rect x="1" y="14" width="6.5" height="22" rx="2" fill="#c8161a" stroke="#e89060" stroke-width=".6"/>
<rect x="46.5" y="14" width="6.5" height="22" rx="2" fill="#c8161a" stroke="#e89060" stroke-width=".6"/>
<path d="M4 36l0 3M50 36v3" stroke="#e8a070" stroke-width="1"/>
<path d="M18 4h17l2 4H16z" fill="#d8402a"/>
<path d="M19 0l1 4M34 0l-1 4" stroke="#f0c080" stroke-width="1"/>
<path d="M0 5c5 3 10 4 15 4h23c5 0 10-1 15-4l-2 6c-3 2-7 3-10 3H12c-3 0-7-1-10-3z" fill="#c8201c"/>
<path d="M4 10h45" stroke="#f0b070" stroke-width="2.5" stroke-dasharray="1.2 1.3"/>
<path d="M8 14h37" stroke="#f0b070" stroke-width="1"/>
<path d="M9.6 15.8H45v161.8c0 4-2 6-5 7-3.5 1-6 4-7 7-2 3-4 5-5.6 7-1.6-2-3.6-4-5.6-7-1-3-3.5-6-7-7-3-1-5.2-3-5.2-7z" fill="#d4161a" stroke="#f2c27a" stroke-width="2"/>
<path d="M14 20h27v156c0 3-2 5-4 6-3 1-5 3-6 6l-3.5 4-3.5-4c-1-3-3-5-6-6-2-1-4-3-4-6z" fill="none" stroke="#e03a30" stroke-width=".8"/>
</svg>
<div class="t" style="z-index:6;left:1386px;top:506px;font-size:15px;font-weight:bold;color:#f5cf7e">嗨</div>
<div class="t" style="z-index:6;left:1386px;top:521.5px;font-size:15px;font-weight:bold;color:#f5cf7e">支</div>
<div class="t" style="z-index:6;left:1386px;top:537px;font-size:15px;font-weight:bold;color:#f5cf7e">付</div>
<div class="t" style="z-index:6;left:1386px;top:563.5px;font-size:15px;font-weight:bold;color:#f5cf7e">跑</div>
<div class="t" style="z-index:6;left:1386px;top:579px;font-size:15px;font-weight:bold;color:#f5cf7e">分</div>
<div class="t" style="z-index:6;left:1386px;top:594.5px;font-size:15px;font-weight:bold;color:#f5cf7e">招</div>
<div class="t" style="z-index:6;left:1386px;top:610px;font-size:15px;font-weight:bold;color:#f5cf7e">募</div>
<div class="a" style="z-index:7;left:1172px;top:651px;width:214px;height:96px;background:#fff;border-radius:8px"></div>
<div class="a" style="z-index:7;left:1181px;top:656px;width:60px;height:18px;border-radius:9px;background:#c8c8c8"></div>
<div class="t" style="z-index:7;left:1181px;width:60px;text-align:center;top:659px;font-size:12px;font-weight:bold;color:#fff">中奖提示</div>
<svg class="a" style="z-index:7;left:1250px;top:657px" width="19" height="15" viewBox="0 0 19 15"><path d="M0 4.5h4L9 0.5v14L4 10.5H0z" fill="#555"/><path d="M12 4c1.5 1.5 1.5 5.5 0 7M15 2c3 3 3 8 0 11" fill="none" stroke="#555" stroke-width="1.4"/></svg>
<svg class="a" style="z-index:7;left:1365px;top:656px" width="16" height="16" viewBox="0 0 16 16"><circle cx="8" cy="8" r="8" fill="#cfcfcf"/><path d="M5 5l6 6M11 5l-6 6" stroke="#fff" stroke-width="2"/></svg>
<div class="t" style="z-index:7;left:1181px;top:682px;font-size:12px;color:#777">恭喜您，您投注的第20220626-0448</div>
<div class="t" style="z-index:7;left:1181px;top:699px;font-size:12px;color:#777">期河内1分彩百家乐庄中奖<span style="color:#d9534f">0.2171元</span></div>
<div class="a" style="z-index:7;left:1236px;top:722px;width:90px;height:20px;background:#e8473e;border-radius:2px"></div>
<div class="t" style="z-index:7;left:1236px;width:90px;text-align:center;top:725px;font-size:13px;color:#fff">点击查看详情</div>
</body></html>
